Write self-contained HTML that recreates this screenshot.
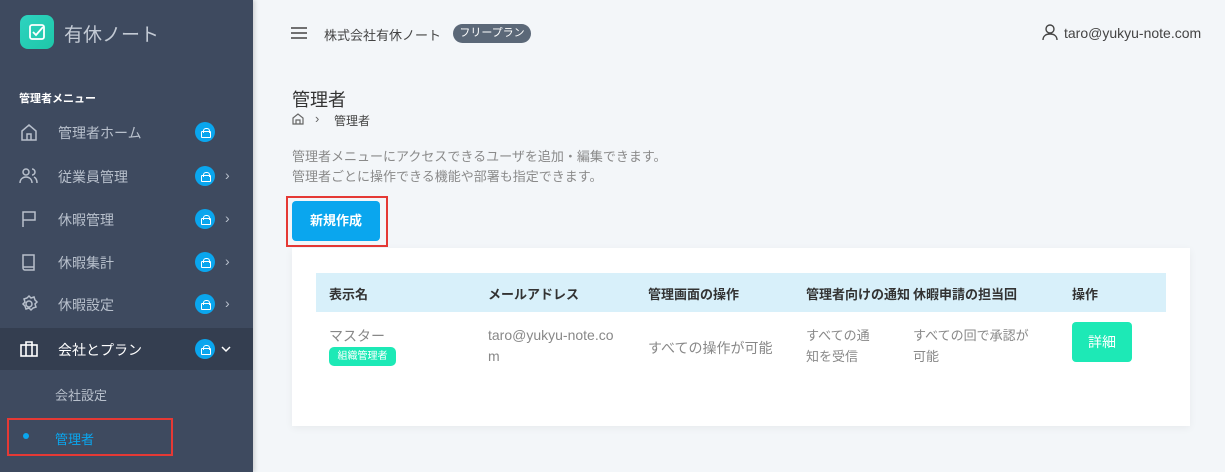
<!DOCTYPE html>
<html><head><meta charset="utf-8"><style>
*{margin:0;padding:0;box-sizing:border-box}
body{width:1225px;height:472px;overflow:hidden;background:#f3f6f9;font-family:"Liberation Sans","Noto Sans CJK JP",sans-serif;position:relative}
.abs{position:absolute;white-space:nowrap}
#sb{position:absolute;left:0;top:0;width:253px;height:472px;background:#3e4a5f;box-shadow:2px 0 4px rgba(0,0,0,.15)}
.it{position:absolute;left:0;width:253px;height:42px}
.it .t{position:absolute;left:58px;top:12px;font-size:14px;color:#b8c0cc}
.it svg.ic{position:absolute;left:19px;top:11px}
.lk{position:absolute;left:195px;top:11px;width:20px;height:20px;border-radius:50%;background:#0aa6ee}
.lk:before{content:"";position:absolute;left:6px;top:9px;width:8px;height:5px;border:1.5px solid #fff;border-radius:1px}
.lk:after{content:"";position:absolute;left:7.5px;top:5.5px;width:5px;height:4px;border:1.5px solid #fff;border-bottom:none;border-radius:3px 3px 0 0}
.ch{position:absolute;left:225px;top:12px;color:#b8c0cc;font-size:14px}
</style></head><body>
<div id="sb">
 <div class="abs" style="left:20px;top:15px;width:34px;height:34px;border-radius:8px;background:linear-gradient(135deg,#2ed3c0,#1ec7a8)">
  <svg width="34" height="34"><rect x="10" y="10" width="14" height="14" rx="2" fill="none" stroke="#fff" stroke-width="1.8"/><path d="M13 17l3 3 7-8" fill="none" stroke="#fff" stroke-width="1.8"/></svg></div>
 <div class="abs" style="left:64px;top:20px;font-size:19px;color:#c3cad4">有休ノート</div>
 <div class="abs" style="left:19px;top:90px;font-size:11px;font-weight:bold;color:#fff">管理者メニュー</div>
 <div class="it" style="top:111px"><svg class="ic" width="20" height="20" fill="none" stroke="#b8c0cc" stroke-width="1.5"><path d="M3 9l7-6 7 6v9H3z M8 18v-6h4v6"/></svg><span class="t">管理者ホーム</span><span class="lk"></span></div>
 <div class="it" style="top:155px"><svg class="ic" width="20" height="20" fill="none" stroke="#b8c0cc" stroke-width="1.5"><circle cx="7" cy="6" r="3"/><path d="M1 17c0-4 3-6 6-6s6 2 6 6M13 3a3 3 0 010 6M15 11c2 1 3 3 3 6"/></svg><span class="t">従業員管理</span><span class="lk"></span><span class="ch">›</span></div>
 <div class="it" style="top:198px"><svg class="ic" width="20" height="20" fill="none" stroke="#b8c0cc" stroke-width="1.5"><path d="M4 18V3h12v8H4"/></svg><span class="t">休暇管理</span><span class="lk"></span><span class="ch">›</span></div>
 <div class="it" style="top:241px"><svg class="ic" width="20" height="20" fill="none" stroke="#b8c0cc" stroke-width="1.5"><path d="M4 3h11v15H6a2 2 0 01-2-2zM4 15h11"/></svg><span class="t">休暇集計</span><span class="lk"></span><span class="ch">›</span></div>
 <div class="it" style="top:283px"><svg class="ic" width="20" height="20" fill="none" stroke="#b8c0cc" stroke-width="1.5"><circle cx="10" cy="10" r="3"/><path d="M10 2l2 2 3-1 1 3 2 2-2 2 1 3-3 1-2 2-2-2-3 1-1-3-2-2 2-2-1-3 3-1z"/></svg><span class="t">休暇設定</span><span class="lk"></span><span class="ch">›</span></div>
 <div class="it" style="top:328px;background:#343e50"><svg class="ic" width="20" height="20" fill="none" stroke="#fff" stroke-width="1.6"><rect x="2" y="6" width="16" height="11"/><path d="M7 6V3h6v3M7 6v11M13 6v11"/></svg><span class="t" style="color:#fff">会社とプラン</span><span class="lk"></span><svg class="abs" style="left:221px;top:17px" width="10" height="8" fill="none" stroke="#fff" stroke-width="1.5"><path d="M1 2l4 4 4-4"/></svg></div>
 <div class="abs" style="left:55px;top:385px;font-size:13px;color:#b8c0cc">会社設定</div>
 <div class="abs" style="left:23px;top:433px;width:6px;height:6px;border-radius:50%;background:#0aa6ee"></div>
 <div class="abs" style="left:55px;top:429px;font-size:13px;color:#0aa6ee">管理者</div>
 <div class="abs" style="left:7px;top:418px;width:166px;height:38px;border:2px solid #e53935"></div>
</div>
<svg class="abs" style="left:290px;top:25px" width="18" height="16" stroke="#444" stroke-width="1.6"><path d="M1 3h16M1 8h16M1 13h16"/></svg>
<div class="abs" style="left:324px;top:25px;font-size:13px;color:#444">株式会社有休ノート</div>
<div class="abs" style="left:453px;top:24px;width:78px;height:19px;border-radius:10px;background:#5b6878;color:#fff;font-size:11px;text-align:center;line-height:19px">フリープラン</div>
<svg class="abs" style="left:1042px;top:23px" width="16" height="18" fill="none" stroke="#444" stroke-width="1.4"><circle cx="8" cy="6" r="4"/><path d="M1 17c0-4 3-6 7-6s7 2 7 6"/></svg>
<div class="abs" style="left:1064px;top:25px;font-size:14px;color:#444">taro@yukyu-note.com</div>
<div class="abs" style="left:292px;top:86px;font-size:18px;color:#333">管理者</div>
<svg class="abs" style="left:292px;top:113px" width="12" height="12" fill="none" stroke="#666" stroke-width="1.2"><path d="M1 5l5-4 5 4v6H1zM4 11V7h4v4"/></svg>
<div class="abs" style="left:315px;top:111px;font-size:13px;color:#666">›</div>
<div class="abs" style="left:334px;top:112px;font-size:12px;color:#444">管理者</div>
<div class="abs" style="left:292px;top:147px;font-size:13px;color:#8a8a8a;line-height:20px">管理者メニューにアクセスできるユーザを追加・編集できます。<br>管理者ごとに操作できる機能や部署も指定できます。</div>
<div class="abs" style="left:286px;top:196px;width:102px;height:51px;border:2px solid #e53935"></div>
<div class="abs" style="left:292px;top:201px;width:88px;height:40px;border-radius:4px;background:#0aa6ee;color:#fff;font-size:13px;font-weight:bold;text-align:center;line-height:40px">新規作成</div>
<div class="abs" style="left:292px;top:248px;width:898px;height:178px;background:#fff;box-shadow:0 2px 8px rgba(0,0,0,.05)"></div>
<div class="abs" style="left:316px;top:273px;width:850px;height:39px;background:#d8f0fa"></div>
<div class="abs" style="left:329px;top:284px;font-size:13px;font-weight:bold;color:#333">表示名</div>
<div class="abs" style="left:488px;top:284px;font-size:13px;font-weight:bold;color:#333">メールアドレス</div>
<div class="abs" style="left:648px;top:284px;font-size:13px;font-weight:bold;color:#333">管理画面の操作</div>
<div class="abs" style="left:806px;top:284px;font-size:13px;font-weight:bold;color:#333">管理者向けの通知</div>
<div class="abs" style="left:913px;top:284px;font-size:13px;font-weight:bold;color:#333">休暇申請の担当回</div>
<div class="abs" style="left:1072px;top:284px;font-size:13px;font-weight:bold;color:#333">操作</div>
<div class="abs" style="left:329px;top:326px;font-size:14px;color:#888">マスター</div>
<div class="abs" style="left:329px;top:347px;width:67px;height:19px;border-radius:5px;background:#1de9b6;color:#fff;font-size:10px;text-align:center;line-height:19px">組織管理者</div>
<div class="abs" style="left:488px;top:325px;font-size:14px;color:#888;line-height:21px">taro@yukyu-note.co<br>m</div>
<div class="abs" style="left:648px;top:338px;font-size:14px;color:#888">すべての操作が可能</div>
<div class="abs" style="left:806px;top:325px;font-size:13px;color:#888;line-height:21px">すべての通<br>知を受信</div>
<div class="abs" style="left:913px;top:325px;font-size:13px;color:#888;line-height:21px">すべての回で承認が<br>可能</div>
<div class="abs" style="left:1072px;top:322px;width:60px;height:40px;border-radius:4px;background:#1de9b6;color:#fff;font-size:14px;text-align:center;line-height:40px">詳細</div>
</body></html>
